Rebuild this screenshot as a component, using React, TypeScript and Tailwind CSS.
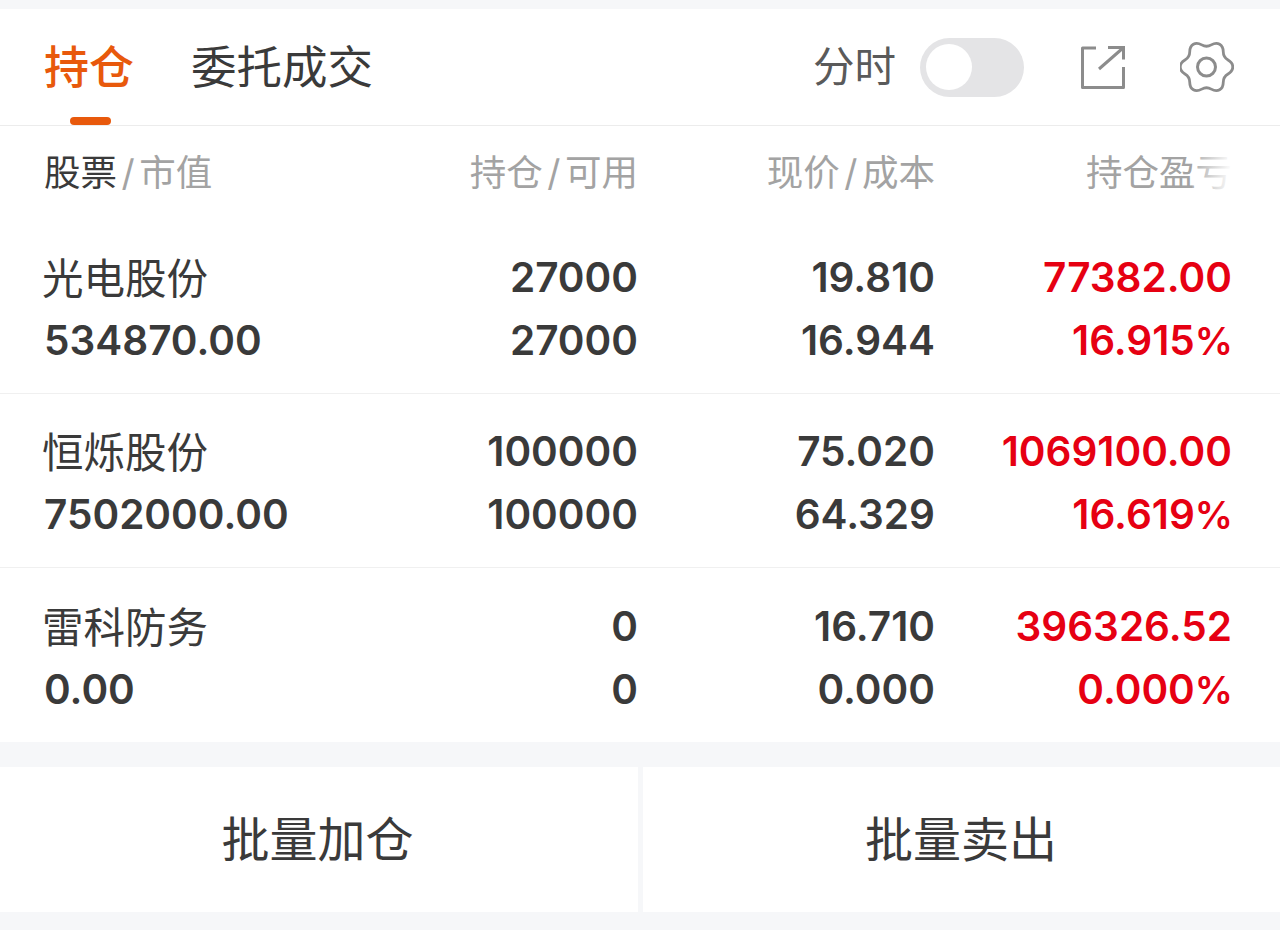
// gear outline: six flat lobes with concave dips, smoothed through edge midpoints
const gearVerts = Array.from({ length: 6 }).flatMap((_, k) => {
  const t = k * 60;
  return [
    [t - 9, 26.6],
    [t + 9, 26.6],
    [t + 30, 19.4],
  ];
}).map(([deg, r]) => {
  const a = (deg * Math.PI) / 180;
  return [26.5 + r * Math.cos(a), 26 + r * Math.sin(a)];
});

const mid = (p: number[], q: number[]) => [(p[0] + q[0]) / 2, (p[1] + q[1]) / 2];
const fmt = (p: number[]) => `${p[0].toFixed(2)} ${p[1].toFixed(2)}`;
const gearPath =
  `M${fmt(mid(gearVerts[gearVerts.length - 1], gearVerts[0]))}` +
  gearVerts.map((v, i) => `Q${fmt(v)} ${fmt(mid(v, gearVerts[(i + 1) % gearVerts.length]))}`).join("") +
  "Z";

const positions = [
  { name: "光电股份", value: "534870.00", hold: "27000", avail: "27000", price: "19.810", cost: "16.944", profit: "77382.00", rate: "16.915" },
  { name: "恒烁股份", value: "7502000.00", hold: "100000", avail: "100000", price: "75.020", cost: "64.329", profit: "1069100.00", rate: "16.619" },
  { name: "雷科防务", value: "0.00", hold: "0", avail: "0", price: "16.710", cost: "0.000", profit: "396326.52", rate: "0.000" },
];

function Slash() {
  return <span className="mx-[4.5px] text-[#a3a3a3] font-['Inter']">/</span>;
}

export default function App() {
  return (
    <div className="w-[1280px] h-[930px] overflow-hidden bg-[#f6f7f9] pt-[9px] font-['Inter','Noto_Sans_CJK_SC',sans-serif] text-[#3a3a3a]">
      <div className="bg-white">
        <div className="h-[117px] flex items-center border-b border-[#ececec] pl-[44px] pr-[46px]">
          <div className="relative h-full flex items-center pt-[2px] text-[45px] font-medium text-[#e8590c]">
            持仓
            <div className="absolute bottom-0 left-[26px] w-[41px] h-[8px] rounded-full bg-[#e8590c]" />
          </div>
          <div className="ml-[57px] pt-[2px] text-[45.5px] text-[#3a3a3a]">委托成交</div>
          <div className="ml-auto flex items-center">
            <span className="text-[41.5px] text-[#5a5a5a]">分时</span>
            <div className="ml-[24px] w-[104px] h-[59px] rounded-full bg-[#e4e4e6] flex items-center pl-[6px]">
              <div className="w-[46px] h-[46px] rounded-full bg-white" />
            </div>
            <svg className="ml-[56px]" width="46" height="45" viewBox="0 0 46 45" fill="none" stroke="#8c8c8c" strokeWidth="3">
              <path d="M16 3H2.5v39.5h41V22" strokeLinejoin="round" />
              <path d="M19 24 43 3M28 2.5h15.5v12" />
            </svg>
            <svg className="ml-[54px]" width="54" height="52" viewBox="0 0 54 52" fill="none" stroke="#8c8c8c" strokeWidth="2.8">
              <path d={gearPath} />
              <circle cx="26.5" cy="26" r="9" strokeWidth="3" />
            </svg>
          </div>
        </div>

        <div className="h-[94px] grid grid-cols-4 items-center pl-[44px] pr-[48px] text-[36.5px] text-[#a3a3a3] overflow-hidden">
          <div className="whitespace-nowrap">
            <span className="text-[#3a3a3a]">股票</span>
            <Slash />市值
          </div>
          <div className="text-right whitespace-nowrap">持仓<Slash />可用</div>
          <div className="text-right whitespace-nowrap">现价<Slash />成本</div>
          <div className="relative text-right whitespace-nowrap">
            持仓盈亏
            <div className="absolute right-0 top-0 bottom-0 w-[40px] bg-gradient-to-r from-white/10 to-white" />
          </div>
        </div>

        {positions.map((p, i) => (
          <div
            key={p.name}
            className={`grid grid-cols-4 pl-[44px] pr-[48px] leading-[63px] text-[40.5px] font-semibold text-[#3a3a3a] ${
              i < positions.length - 1 ? "border-b border-[#f0f0f0] pt-[26px] pb-[21px]" : "pt-[27px] pb-[21px]"
            }`}
          >
            <div>
              <div className="-ml-[2px] text-[41.5px] font-normal translate-y-[2px]">{p.name}</div>
              <div>{p.value}</div>
            </div>
            <div className="text-right">
              <div>{p.hold}</div>
              <div>{p.avail}</div>
            </div>
            <div className="text-right">
              <div>{p.price}</div>
              <div>{p.cost}</div>
            </div>
            <div className="text-right text-[#e60012]">
              <div>{p.profit}</div>
              <div className="-mr-[1px]">
                {p.rate}
                <span className="text-[38px] leading-none">%</span>
              </div>
            </div>
          </div>
        ))}
      </div>

      <div className="mt-[25px] h-[145px] flex gap-[5px] text-[48px] text-[#3a3a3a]">
        <div className="w-[638px] bg-white flex items-center justify-center pr-[3px]">批量加仓</div>
        <div className="flex-1 bg-white flex items-center justify-center pr-[1px]">批量卖出</div>
      </div>
    </div>
  );
}
